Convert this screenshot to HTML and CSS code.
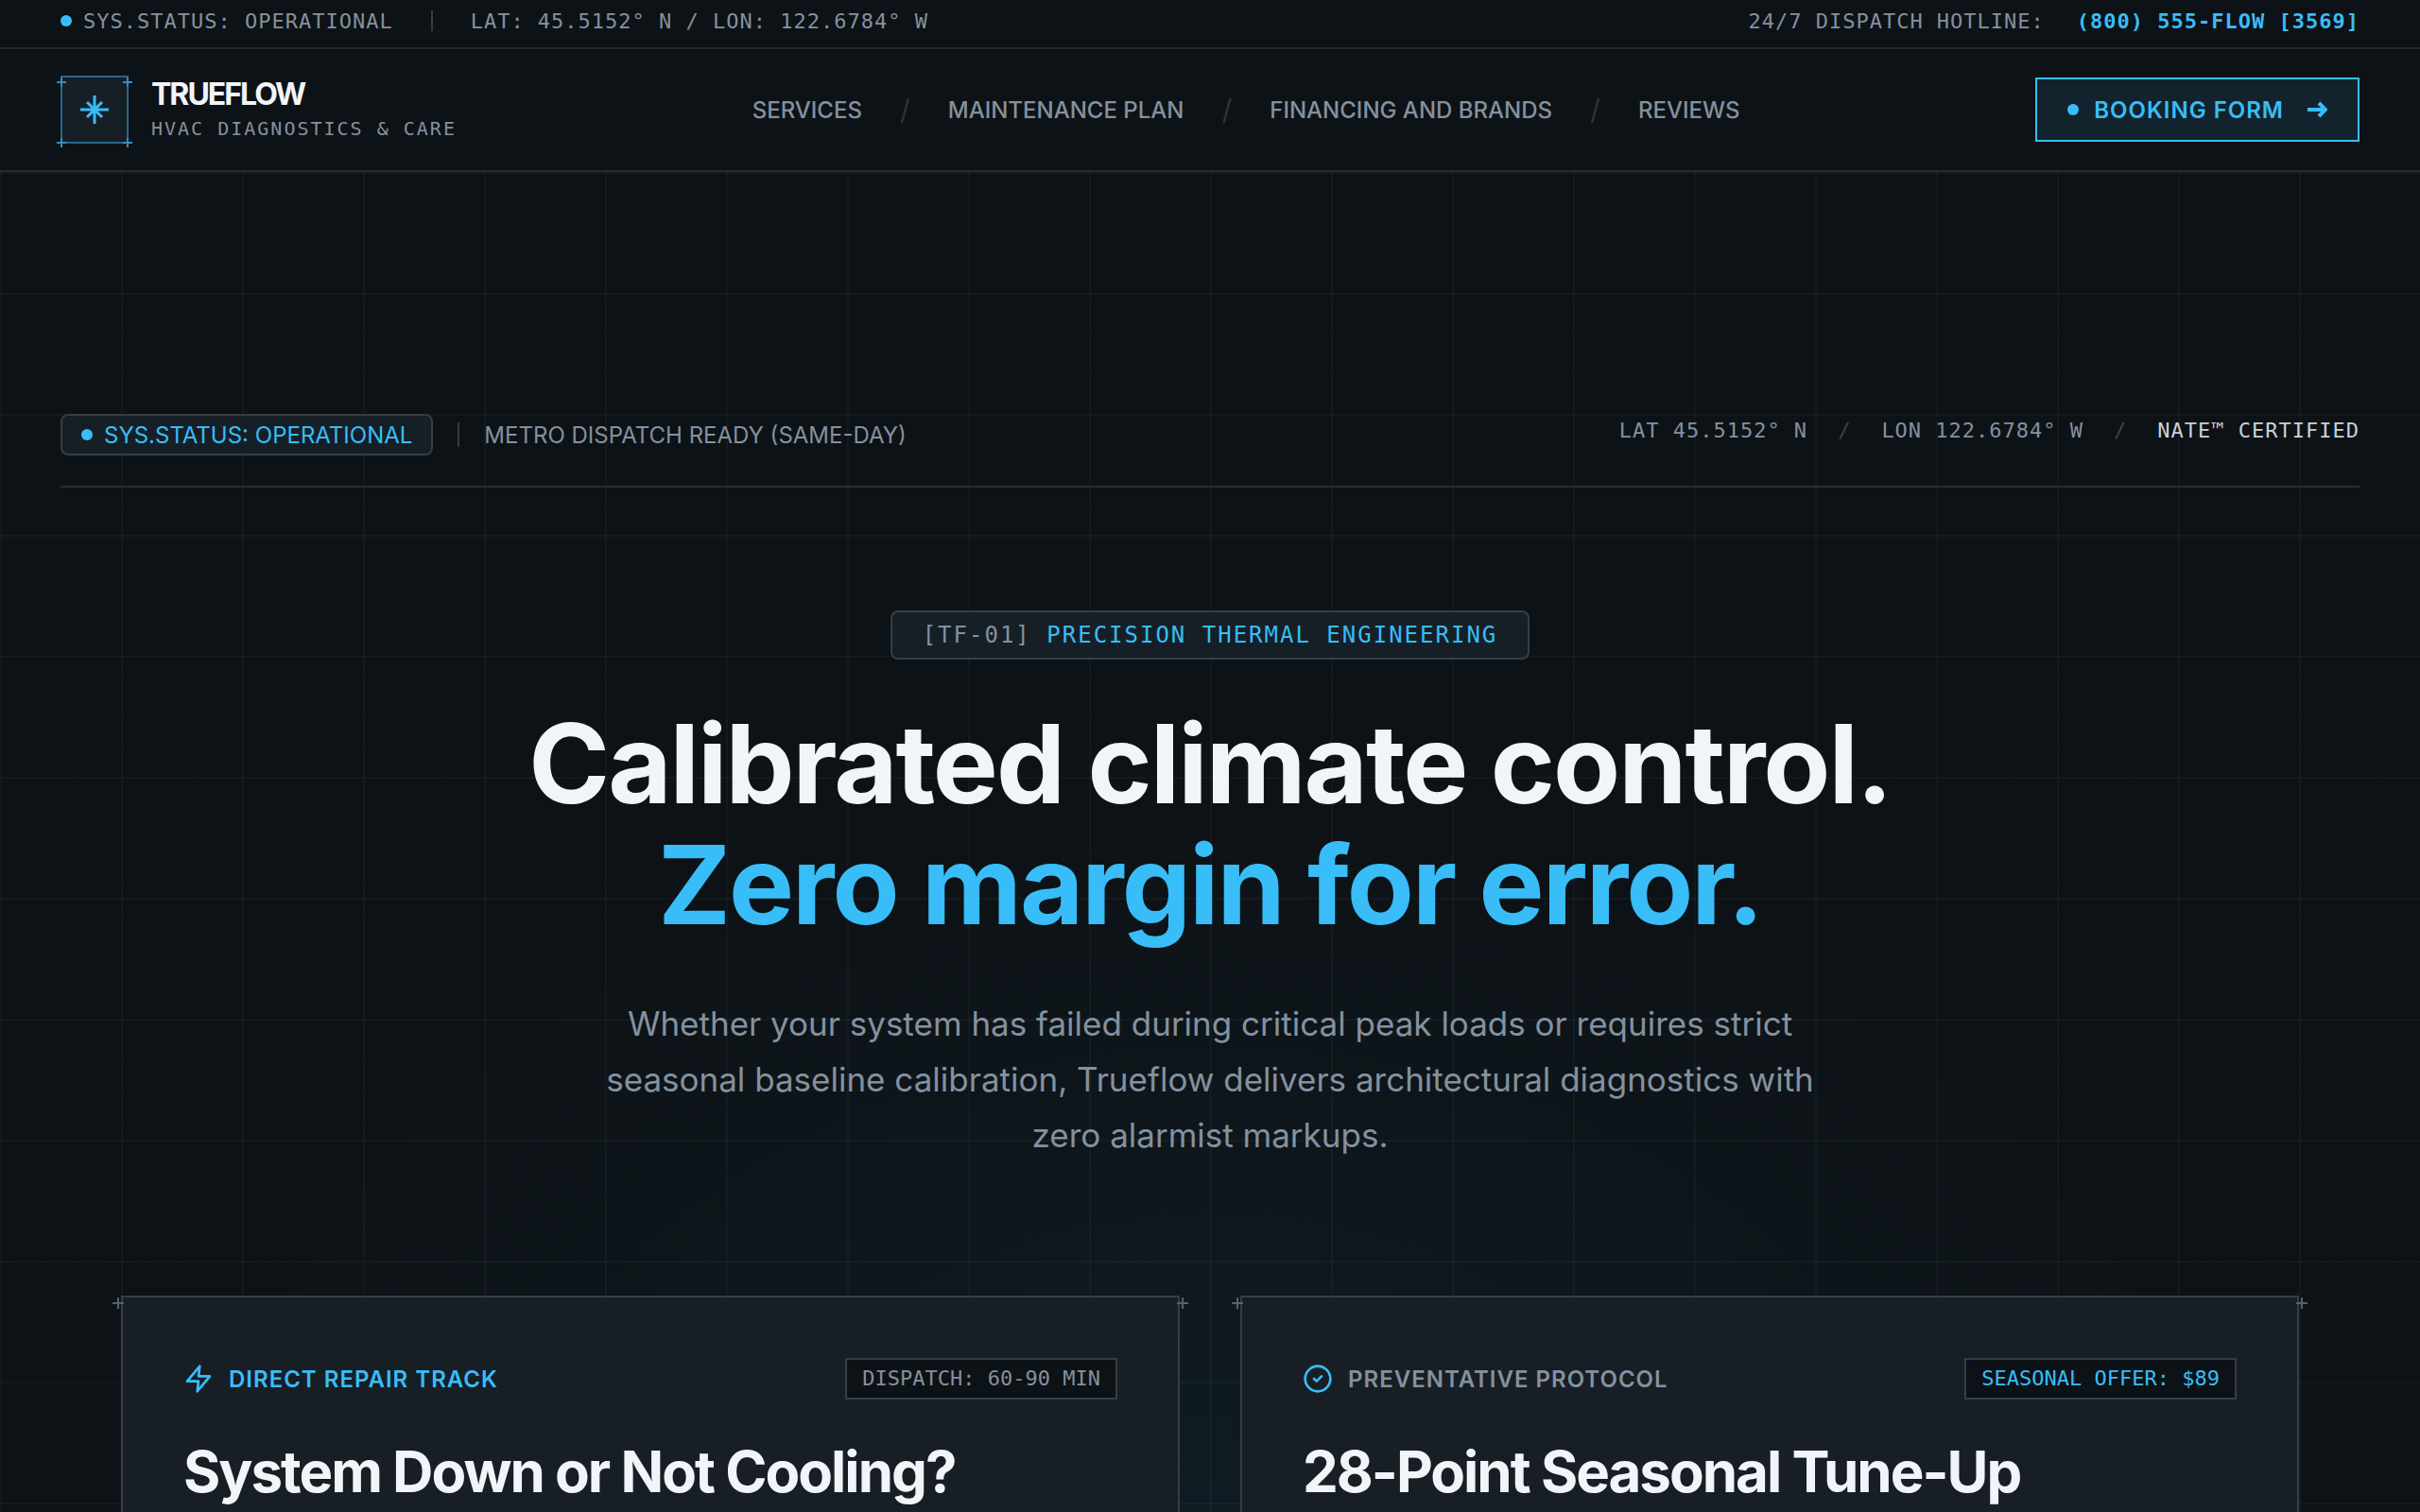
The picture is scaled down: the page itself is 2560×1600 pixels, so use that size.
FILE: index.html
```html
<!DOCTYPE html>
<html lang="en">
<head>
<meta charset="utf-8">
<meta name="viewport" content="width=device-width, initial-scale=1">
<title>Trueflow HVAC Diagnostics &amp; Care</title>
<link rel="stylesheet" href="styles.css">
</head>
<body>
<header class="site-header">
  <div class="topbar">
    <div class="topbar-group">
      <span class="status"><span class="dot"></span>SYS.STATUS: OPERATIONAL</span>
      <span class="rule"></span>
      <span>LAT: 45.5152° N / LON: 122.6784° W</span>
    </div>
    <div class="topbar-hotline">
      <span>24/7 DISPATCH HOTLINE:</span>
      <a class="phone" href="tel:+18005553569">(800) 555-FLOW [3569]</a>
    </div>
  </div>
  <div class="navbar">
    <a class="brand" href="#">
      <span class="logo">
        <svg class="logo-mark" viewBox="0 0 30 30" aria-hidden="true"><path d="M15 0v30M0 15h30M7 7l16 16M23 7L7 23"/></svg>
        <svg class="cross cross-tl" viewBox="0 0 10 10" aria-hidden="true"><path d="M5 0v10M0 5h10"/></svg>
        <svg class="cross cross-tr" viewBox="0 0 10 10" aria-hidden="true"><path d="M5 0v10M0 5h10"/></svg>
        <svg class="cross cross-bl" viewBox="0 0 10 10" aria-hidden="true"><path d="M5 0v10M0 5h10"/></svg>
        <svg class="cross cross-br" viewBox="0 0 10 10" aria-hidden="true"><path d="M5 0v10M0 5h10"/></svg>
      </span>
      <span class="brand-text">
        <span class="brand-name">TRUEFLOW</span>
        <span class="brand-tag">HVAC DIAGNOSTICS &amp; CARE</span>
      </span>
    </a>
    <nav class="nav">
      <a href="#services">SERVICES</a>
      <span class="slash">/</span>
      <a href="#plan">MAINTENANCE PLAN</a>
      <span class="slash">/</span>
      <a href="#financing">FINANCING AND BRANDS</a>
      <span class="slash">/</span>
      <a href="#reviews">REVIEWS</a>
    </nav>
    <button class="booking" type="button">
      <span class="dot"></span>
      <span>BOOKING FORM</span>
      <svg class="arrow" viewBox="0 0 22 18" aria-hidden="true"><path d="M1 9h19M13 2l7 7-7 7"/></svg>
    </button>
  </div>
</header>

<main class="hero">
  <div class="hero-status">
    <div class="hero-status-left">
      <span class="badge"><span class="dot"></span>SYS.STATUS: OPERATIONAL</span>
      <span class="rule"></span>
      <span>METRO DISPATCH READY (SAME-DAY)</span>
    </div>
    <div class="hero-status-right">
      <span>LAT 45.5152° N</span>
      <span class="thin-slash">/</span>
      <span>LON 122.6784° W</span>
      <span class="thin-slash">/</span>
      <span class="cert">NATE™ CERTIFIED</span>
    </div>
  </div>

  <div class="intro">
    <p class="kicker"><span class="kicker-code">[TF-01]</span> PRECISION THERMAL ENGINEERING</p>
    <h1 class="headline">Calibrated climate control.<br><span class="accent">Zero margin for error.</span></h1>
    <p class="lead">Whether your system has failed during critical peak loads or requires strict seasonal baseline calibration, Trueflow delivers architectural diagnostics with zero alarmist markups.</p>
  </div>

  <div class="tracks">
    <section class="card">
      <svg class="cross cross-tl" viewBox="0 0 12 12" aria-hidden="true"><path d="M6 0v12M0 6h12"/></svg>
      <svg class="cross cross-tr" viewBox="0 0 12 12" aria-hidden="true"><path d="M6 0v12M0 6h12"/></svg>
      <div class="card-top">
        <span class="card-label card-label-accent">
          <svg class="icon" viewBox="0 0 24 24" aria-hidden="true"><path d="M13 2 3 14h9l-1 8 10-12h-9l1-8z"/></svg>
          DIRECT REPAIR TRACK
        </span>
        <span class="tag">DISPATCH: 60-90 MIN</span>
      </div>
      <h2 class="card-title">System Down or Not Cooling?</h2>
    </section>
    <section class="card">
      <svg class="cross cross-tl" viewBox="0 0 12 12" aria-hidden="true"><path d="M6 0v12M0 6h12"/></svg>
      <svg class="cross cross-tr" viewBox="0 0 12 12" aria-hidden="true"><path d="M6 0v12M0 6h12"/></svg>
      <div class="card-top">
        <span class="card-label">
          <svg class="icon" viewBox="0 0 24 24" aria-hidden="true"><circle cx="12" cy="12" r="10"/><path d="m9 12 2 2 4-4"/></svg>
          PREVENTATIVE PROTOCOL
        </span>
        <span class="tag tag-accent">SEASONAL OFFER: $89</span>
      </div>
      <h2 class="card-title">28-Point Seasonal Tune-Up</h2>
    </section>
  </div>
</main>
</body>
</html>
```
FILE: styles.css
```css
:root {
  --bg: #0d1216;
  --panel: #171f26;
  --line: #22282d;
  --edge: #343e47;
  --muted: #84919f;
  --text: #f1f4f9;
  --accent: #38bdf8;
  --sans: Inter, "Liberation Sans", sans-serif;
  --mono: "DejaVu Sans Mono", "Liberation Mono", monospace;
}

* { box-sizing: border-box; }

body {
  margin: 0;
  min-height: 100vh;
  display: flex;
  flex-direction: column;
  background: var(--bg);
  color: var(--muted);
  font-family: var(--sans);
  font-size: 24px;
}

a { color: inherit; text-decoration: none; }
h1, h2, p { margin: 0; }

.dot {
  flex: none;
  width: 12px;
  height: 12px;
  border-radius: 50%;
  background: var(--accent);
}

.rule { width: 2px; background: #353c43; }

.cross {
  position: absolute;
  fill: none;
  stroke-width: 2;
}

/* header */

.site-header { flex: none; background: var(--bg); }

.topbar {
  display: flex;
  justify-content: space-between;
  align-items: center;
  height: 52px;
  padding: 0 64px 6px;
  border-bottom: 2px solid var(--line);
  font-family: var(--mono);
  font-size: 22px;
  letter-spacing: 1px;
}

.topbar-group { display: flex; align-items: center; gap: 40px; }
.topbar-group .rule { height: 22px; }
.topbar-hotline { display: flex; gap: 34px; }
.status { display: flex; align-items: center; gap: 12px; }
.phone { color: var(--accent); font-weight: 700; }

.navbar {
  display: flex;
  justify-content: space-between;
  align-items: center;
  height: 130px;
  padding: 0 64px;
  border-bottom: 2px solid #262c33;
}

.brand { display: flex; align-items: center; gap: 24px; }

.logo {
  position: relative;
  display: grid;
  place-items: center;
  width: 72px;
  height: 72px;
  border: 2px solid #28658a;
  background: var(--panel);
}

.logo-mark {
  width: 30px;
  height: 30px;
  fill: none;
  stroke: var(--accent);
  stroke-width: 3;
}

.logo .cross { width: 10px; height: 10px; stroke: #2f8fc0; }
.logo .cross-tl { left: -6px; top: 0; }
.logo .cross-tr { right: -6px; top: 0; }
.logo .cross-bl { left: -6px; bottom: -6px; }
.logo .cross-br { right: -6px; bottom: -6px; }

.brand-text { display: flex; flex-direction: column; gap: 4px; }

.brand-name {
  color: var(--text);
  font-size: 32px;
  font-weight: 700;
  line-height: 36px;
  letter-spacing: -2px;
}

.brand-tag {
  font-family: var(--mono);
  font-size: 20px;
  line-height: 28px;
  letter-spacing: 2px;
}

.nav {
  display: flex;
  align-items: center;
  gap: 40px;
  font-size: 24px;
  font-weight: 500;
}

.slash { color: #2c343b; font-size: 30px; font-weight: 400; }

.booking {
  display: flex;
  align-items: center;
  gap: 16px;
  height: 68px;
  padding: 0 32px;
  border: 2px solid var(--accent);
  background: #12232d;
  color: var(--accent);
  font: 600 24px var(--sans);
  letter-spacing: 1px;
}

.arrow {
  width: 22px;
  height: 18px;
  margin-left: 8px;
  fill: none;
  stroke: currentColor;
  stroke-width: 4;
}

/* hero */

.hero {
  flex: 1;
  display: flex;
  flex-direction: column;
  padding: 256px 64px 0;
  background:
    linear-gradient(90deg, rgba(148, 163, 184, .05) 2px, transparent 2px) 0 0 / 128px 128px,
    linear-gradient(rgba(148, 163, 184, .05) 2px, transparent 2px) 0 0 / 128px 128px,
    radial-gradient(1100px 800px at 50% 1480px, rgba(56, 189, 248, .06), transparent);
}

.hero-status {
  display: flex;
  justify-content: space-between;
  align-items: flex-start;
  padding-bottom: 32px;
  border-bottom: 2px solid #282e34;
}

.hero-status-left { display: flex; align-items: center; gap: 26px; }
.hero-status-left .rule { height: 26px; }

.badge {
  display: flex;
  align-items: center;
  gap: 12px;
  height: 44px;
  padding: 0 20px;
  border: 2px solid var(--edge);
  border-radius: 8px;
  background: var(--panel);
  color: var(--accent);
}

.hero-status-right {
  display: flex;
  gap: 32px;
  font-family: var(--mono);
  font-size: 22px;
  line-height: 36px;
  letter-spacing: 1px;
}

.thin-slash { color: #3b444c; }
.cert { color: #cbd0d6; }

.intro {
  display: flex;
  flex-direction: column;
  align-items: center;
  padding-top: 130px;
  text-align: center;
}

.kicker {
  padding: 0 32px;
  border: 2px solid var(--edge);
  border-radius: 8px;
  background: var(--panel);
  color: var(--accent);
  font-family: var(--mono);
  font-size: 24px;
  line-height: 48px;
  letter-spacing: 2px;
}

.kicker-code { color: var(--muted); }

.headline {
  margin-top: 46px;
  color: var(--text);
  font-size: 116px;
  font-weight: 700;
  line-height: 128px;
  letter-spacing: -2px;
}

.accent { color: var(--accent); }

.lead {
  max-width: 1320px;
  margin-top: 54px;
  font-size: 35px;
  line-height: 59px;
}

.tracks {
  flex: 1;
  display: grid;
  grid-template-columns: 1fr 1fr;
  gap: 64px;
  padding: 140px 64px 0;
}

.card {
  position: relative;
  padding: 64px 64px 0;
  border: 2px solid var(--edge);
  border-bottom: 0;
  background: rgba(24, 31, 38, .92);
}

.card .cross { width: 12px; height: 12px; top: 0; stroke: #56616b; }
.card .cross-tl { left: -11px; }
.card .cross-tr { right: -11px; }

.card-top { display: flex; justify-content: space-between; align-items: center; }

.card-label {
  display: flex;
  align-items: center;
  gap: 16px;
  font-weight: 600;
  letter-spacing: 1px;
}

.card-label-accent { color: var(--accent); }

.icon {
  width: 32px;
  height: 32px;
  fill: none;
  stroke: var(--accent);
  stroke-width: 2;
  stroke-linecap: round;
  stroke-linejoin: round;
}

.tag {
  padding: 0 16px;
  border: 2px solid var(--edge);
  background: var(--bg);
  font-family: var(--mono);
  font-size: 22px;
  line-height: 40px;
}

.tag-accent { color: var(--accent); }

.card-title {
  margin-top: 36px;
  color: var(--text);
  font-size: 60px;
  font-weight: 700;
  line-height: 80px;
  letter-spacing: -2px;
}
```
